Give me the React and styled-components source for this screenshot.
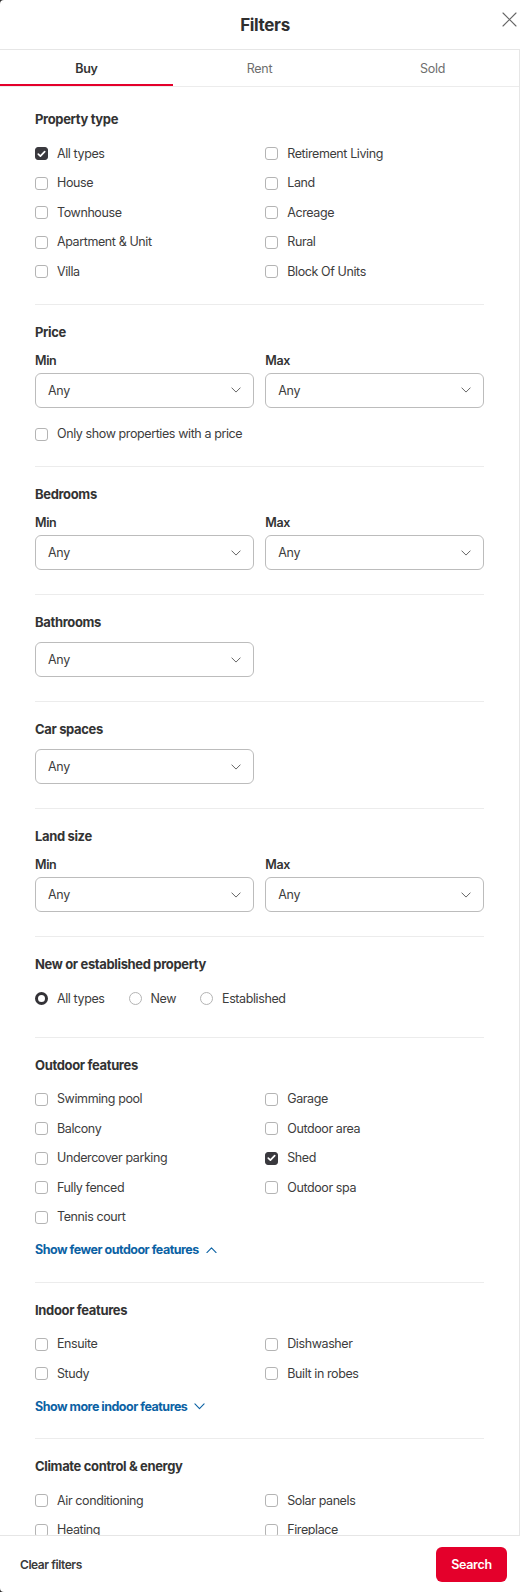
import React from "react";
import styled, { createGlobalStyle } from "styled-components";

const GlobalStyle = createGlobalStyle`
  html, body { margin: 0; padding: 0; }
  body {
    background: #2e2e2e;
    font-family: Inter, "Noto Sans", sans-serif;
    color: #3b3b3b;
    -webkit-font-smoothing: antialiased;
  }
  * { box-sizing: border-box; }
`;

const Modal = styled.div`
  width: 520px;
  height: 1592px;
  background: #fff;
  border-radius: 4px 0 0 4px;
  overflow: hidden;
  display: flex;
  flex-direction: column;
`;

const Header = styled.header`
  height: 50px;
  flex: none;
  border-bottom: 1px solid #e6e6e6;
  display: grid;
  grid-template-columns: 1fr auto 1fr;
  align-items: center;
`;

const Title = styled.h1`
  grid-column: 2;
  margin: 0 0 0 10px;
  font-size: 17px;
  line-height: 24px;
  font-weight: 700;
  letter-spacing: -0.35px;
  color: #2f2f2f;
`;

const CloseButton = styled.button`
  grid-column: 3;
  justify-self: end;
  align-self: start;
  margin: 12px 3px 0 0;
  padding: 0;
  border: 0;
  background: none;
  width: 15px;
  height: 15px;
  display: flex;
`;

const Body = styled.div`
  flex: 1;
  min-height: 0;
  overflow: hidden;
  border-right: 1px solid #e6e6e6;
`;

const Tabs = styled.nav`
  display: grid;
  grid-template-columns: repeat(3, 1fr);
  border-bottom: 1px solid #ececec;
`;

const Tab = styled.div`
  height: 36px;
  display: flex;
  align-items: center;
  justify-content: center;
  font-size: 12.5px;
  letter-spacing: -0.3px;
  font-weight: ${(p) => (p.$active ? 600 : 400)};
  color: ${(p) => (p.$active ? "#333" : "#6e6e6e")};
  border-bottom: 2px solid ${(p) => (p.$active ? "#e4002b" : "transparent")};
  padding-top: 2px;
`;

const Content = styled.div`
  padding: 5px 35px 0 35px;
`;

const Section = styled.section`
  padding: 17px 0 17px;
  border-bottom: 1px solid #ececec;
  &:last-child { border-bottom: 0; }
`;

const Heading = styled.h2`
  margin: 0 0 10px;
  font-size: 13px;
  line-height: 20px;
  font-weight: 700;
  letter-spacing: -0.35px;
  color: #333;
`;

const TwoCol = styled.div`
  display: grid;
  grid-template-columns: 1fr 1fr;
  column-gap: 11.5px;
  grid-auto-rows: ${(p) => p.$rowHeight || "auto"};
  align-items: center;
  margin-top: ${(p) => p.$mt || 0}px;
  &:last-child { margin-bottom: ${(p) => p.$endGap || 0}px; }
`;

const CheckRow = styled.label`
  display: flex;
  align-items: center;
  gap: 9px;
  font-size: 12.5px;
  line-height: 20px;
  letter-spacing: -0.4px;
  color: #3d3d3d;
`;

const Box = styled.span`
  flex: none;
  width: 13px;
  height: 13px;
  border-radius: 3px;
  border: 1px solid ${(p) => (p.$checked ? "#3a393e" : "#b4b4b4")};
  background: ${(p) => (p.$checked ? "#3a393e" : "#fff")};
  display: flex;
  align-items: center;
  justify-content: center;
`;

const FieldLabel = styled.div`
  font-size: 12.5px;
  line-height: 18px;
  font-weight: 600;
  letter-spacing: -0.35px;
  color: #333;
  margin-bottom: 3px;
`;

const Field = styled.div`
  display: flex;
  flex-direction: column;
`;

const SelectBox = styled.div`
  height: 35px;
  border: 1px solid #bcbcbc;
  border-radius: 6px;
  display: flex;
  align-items: center;
  justify-content: space-between;
  padding: 0 12px 0 12px;
  font-size: 12.5px;
  letter-spacing: -0.35px;
  color: #3d3d3d;
  background: #fff;
`;

const RadioGroup = styled.div`
  display: flex;
  align-items: center;
  gap: 24px;
  height: 29.5px;
  margin-bottom: 6px;
`;

const RadioRow = styled.label`
  display: flex;
  align-items: center;
  gap: 9px;
  font-size: 12.5px;
  line-height: 20px;
  letter-spacing: -0.4px;
  color: #3d3d3d;
`;

const RadioDot = styled.span`
  flex: none;
  width: 13px;
  height: 13px;
  border-radius: 50%;
  border: ${(p) => (p.$checked ? "3.5px solid #333237" : "1px solid #b4b4b4")};
  background: #fff;
`;

const ToggleLink = styled.button`
  display: flex;
  align-items: center;
  gap: 7px;
  padding: 0;
  border: 0;
  background: none;
  margin-top: 3px;
  height: 29.5px;
  font-family: inherit;
  font-size: 12.5px;
  font-weight: 700;
  letter-spacing: -0.5px;
  color: #0b62a4;
`;

const Footer = styled.footer`
  flex: none;
  height: 57px;
  border-top: 1px solid #e6e6e6;
  display: flex;
  align-items: center;
  justify-content: space-between;
  padding: 0 13px 0 20px;
`;

const ClearButton = styled.button`
  padding: 0;
  border: 0;
  background: none;
  font-family: inherit;
  font-size: 12px;
  font-weight: 600;
  letter-spacing: -0.45px;
  color: #3b3b3b;
`;

const SearchButton = styled.button`
  width: 71px;
  height: 35px;
  border: 0;
  border-radius: 6px;
  background: #e4002b;
  color: #fff;
  font-family: inherit;
  font-size: 12.5px;
  font-weight: 600;
  letter-spacing: -0.3px;
`;

const Chevron = ({ up, color = "#666", w = 10 }) => (
  <svg width={w} height={w / 2 + 1} viewBox="0 0 12 7" fill="none">
    <path
      d={up ? "M1 6 L6 1 L11 6" : "M1 1 L6 6 L11 1"}
      stroke={color}
      strokeWidth="1.2"
      strokeLinecap="round"
      strokeLinejoin="round"
    />
  </svg>
);

const Checkbox = ({ label, checked }) => (
  <CheckRow>
    <Box $checked={checked}>
      {checked && (
        <svg width="9" height="8" viewBox="0 0 9 8" fill="none">
          <path d="M1.3 4.2 L3.4 6.2 L7.7 1.6" stroke="#fff" strokeWidth="1.7" strokeLinecap="round" strokeLinejoin="round" />
        </svg>
      )}
    </Box>
    {label}
  </CheckRow>
);

const Select = ({ label }) => (
  <Field>
    {label && <FieldLabel>{label}</FieldLabel>}
    <SelectBox>
      Any
      <Chevron />
    </SelectBox>
  </Field>
);

const CheckGrid = ({ items, checked = [] }) => (
  <TwoCol $rowHeight="29.5px">
    {items.map((it) => (
      <Checkbox key={it} label={it} checked={checked.includes(it)} />
    ))}
  </TwoCol>
);

const MinMax = () => (
  <TwoCol $endGap={7}>
    <Select label="Min" />
    <Select label="Max" />
  </TwoCol>
);

const Single = () => (
  <TwoCol $endGap={7}>
    <Select />
  </TwoCol>
);

export default function App() {
  return (
    <>
      <GlobalStyle />
      <Modal>
        <Header>
          <Title>Filters</Title>
          <CloseButton aria-label="Close">
            <svg width="15" height="15" viewBox="0 0 15 15" fill="none">
              <path d="M1 1 L14 14 M14 1 L1 14" stroke="#666" strokeWidth="1.1" strokeLinecap="round" />
            </svg>
          </CloseButton>
        </Header>
        <Body>
          <Tabs>
            <Tab $active>Buy</Tab>
            <Tab>Rent</Tab>
            <Tab>Sold</Tab>
          </Tabs>
          <Content>
            <Section>
              <Heading>Property type</Heading>
              <CheckGrid
                items={[
                  "All types",
                  "Retirement Living",
                  "House",
                  "Land",
                  "Townhouse",
                  "Acreage",
                  "Apartment & Unit",
                  "Rural",
                  "Villa",
                  "Block Of Units",
                ]}
                checked={["All types"]}
              />
            </Section>
            <Section>
              <Heading>Price</Heading>
              <TwoCol>
                <Select label="Min" />
                <Select label="Max" />
              </TwoCol>
              <TwoCol $rowHeight="29.5px" $mt={12}>
                <Checkbox label="Only show properties with a price" />
              </TwoCol>
            </Section>
            <Section>
              <Heading>Bedrooms</Heading>
              <MinMax />
            </Section>
            <Section>
              <Heading>Bathrooms</Heading>
              <Single />
            </Section>
            <Section>
              <Heading>Car spaces</Heading>
              <Single />
            </Section>
            <Section>
              <Heading>Land size</Heading>
              <MinMax />
            </Section>
            <Section>
              <Heading>New or established property</Heading>
              <RadioGroup>
                <RadioRow><RadioDot $checked />All types</RadioRow>
                <RadioRow><RadioDot />New</RadioRow>
                <RadioRow><RadioDot />Established</RadioRow>
              </RadioGroup>
            </Section>
            <Section>
              <Heading>Outdoor features</Heading>
              <CheckGrid
                items={[
                  "Swimming pool",
                  "Garage",
                  "Balcony",
                  "Outdoor area",
                  "Undercover parking",
                  "Shed",
                  "Fully fenced",
                  "Outdoor spa",
                  "Tennis court",
                ]}
                checked={["Shed"]}
              />
              <ToggleLink>
                Show fewer outdoor features
                <Chevron up color="#0b62a4" w={11} />
              </ToggleLink>
            </Section>
            <Section>
              <Heading>Indoor features</Heading>
              <CheckGrid items={["Ensuite", "Dishwasher", "Study", "Built in robes"]} />
              <ToggleLink>
                Show more indoor features
                <Chevron color="#0b62a4" w={11} />
              </ToggleLink>
            </Section>
            <Section>
              <Heading>Climate control &amp; energy</Heading>
              <CheckGrid items={["Air conditioning", "Solar panels", "Heating", "Fireplace"]} />
            </Section>
          </Content>
        </Body>
        <Footer>
          <ClearButton>Clear filters</ClearButton>
          <SearchButton>Search</SearchButton>
        </Footer>
      </Modal>
    </>
  );
}
